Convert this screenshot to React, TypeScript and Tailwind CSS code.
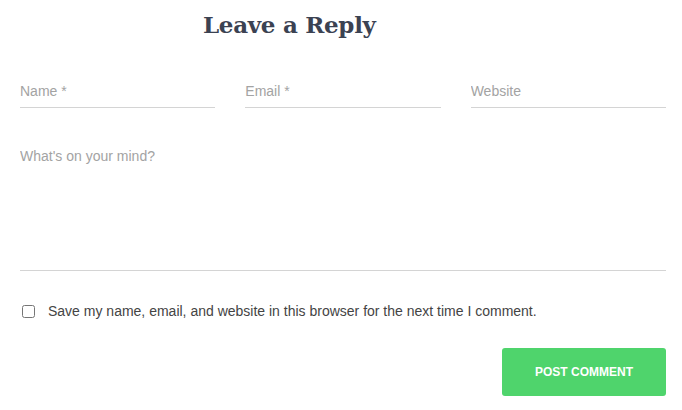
export default function App() {
  return (
    <div className="w-[682px] h-[410px] bg-white overflow-hidden" style={{ fontFamily: '"Liberation Sans", Arial, sans-serif' }}>
      <div className="px-[20px] pr-[16px]">
        <h3
          className="pt-[9px] pl-[183px] text-[23px] leading-[32px] font-bold text-[#3b4252]"
          style={{ fontFamily: '"DejaVu Serif", serif', letterSpacing: '-0.3px' }}
        >
          Leave a Reply
        </h3>

        {/* Name / email / website */}
        <div className="mt-[34px] grid grid-cols-3 gap-[30px]">
          {['Name *', 'Email *', 'Website'].map((p) => (
            <input
              key={p}
              placeholder={p}
              className="h-[33px] border-b border-[#d4d4d4] text-[14px] text-[#555] placeholder:text-[#a3a3a3] outline-none"
            />
          ))}
        </div>

        <textarea
          placeholder="What's on your mind?"
          className="mt-[38px] block w-full h-[125px] resize-none border-b border-[#d4d4d4] text-[14px] text-[#555] placeholder:text-[#a3a3a3] outline-none"
        />

        <label className="mt-[30px] flex items-center gap-[13px] text-[14px] text-[#444]">
          <input type="checkbox" className="ml-[2px] w-[13px] h-[13px]" />
          Save my name, email, and website in this browser for the next time I comment.
        </label>

        <div className="mt-[26px] flex justify-end">
          <button className="w-[164px] h-[48px] rounded-[3px] bg-[#4fd46c] text-white text-[12px] font-bold uppercase">
            Post Comment
          </button>
        </div>
      </div>
    </div>
  )
}
